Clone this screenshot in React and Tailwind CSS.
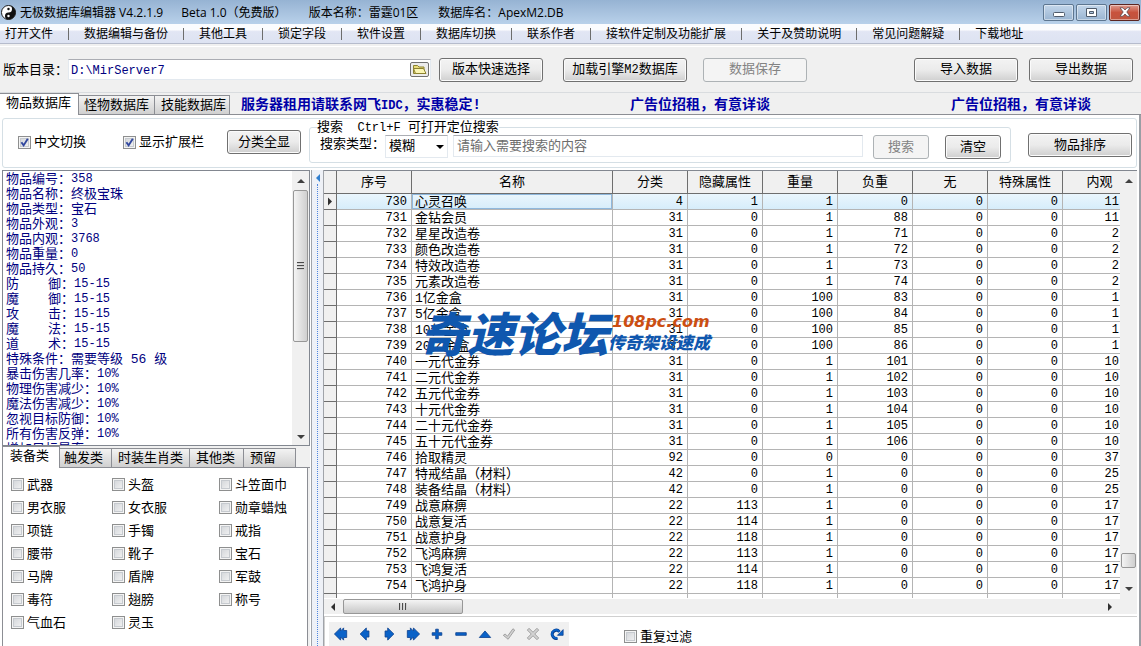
const SONG = "font-['Liberation_Mono','Noto_Sans_CJK_SC',monospace]";
const YAHEI = "font-['Open_Sans','Noto_Sans_CJK_SC',sans-serif]";

const MENU = ['打开文件', '数据编辑与备份', '其他工具', '锁定字段', '软件设置', '数据库切换', '联系作者', '接软件定制及功能扩展', '关于及赞助说明', '常见问题解疑', '下载地址'];

const DETAILS = [
  ['物品编号：', '358'],
  ['物品名称：', '终极宝珠', 'cjk'],
  ['物品类型：', '宝石', 'cjk'],
  ['物品外观：', '3'],
  ['物品内观：', '3768'],
  ['物品重量：', '0'],
  ['物品持久：', '50'],
  ['防御', '15-15', 'wide'],
  ['魔御', '15-15', 'wide'],
  ['攻击', '15-15', 'wide'],
  ['魔法', '15-15', 'wide'],
  ['道术', '15-15', 'wide'],
  ['特殊条件：', '需要等级 56 级', 'cjk'],
  ['暴击伤害几率：', '10%'],
  ['物理伤害减少：', '10%'],
  ['魔法伤害减少：', '10%'],
  ['忽视目标防御：', '10%'],
  ['所有伤害反弹：', '10%'],
  ['增加目标暴率', ''],
];

const ROWS = [
  [730, '心灵召唤', 4, 1, 1, 0, 0, 0, 11],
  [731, '金钻会员', 31, 0, 1, 88, 0, 0, 11],
  [732, '星星改造卷', 31, 0, 1, 71, 0, 0, 2],
  [733, '颜色改造卷', 31, 0, 1, 72, 0, 0, 2],
  [734, '特效改造卷', 31, 0, 1, 73, 0, 0, 2],
  [735, '元素改造卷', 31, 0, 1, 74, 0, 0, 2],
  [736, '1亿金盒', 31, 0, 100, 83, 0, 0, 1],
  [737, '5亿金盒', 31, 0, 100, 84, 0, 0, 1],
  [738, '10亿金盒', 31, 0, 100, 85, 0, 0, 1],
  [739, '20亿金盒', 31, 0, 100, 86, 0, 0, 1],
  [740, '一元代金券', 31, 0, 1, 101, 0, 0, 10],
  [741, '二元代金券', 31, 0, 1, 102, 0, 0, 10],
  [742, '五元代金券', 31, 0, 1, 103, 0, 0, 10],
  [743, '十元代金券', 31, 0, 1, 104, 0, 0, 10],
  [744, '二十元代金券', 31, 0, 1, 105, 0, 0, 10],
  [745, '五十元代金券', 31, 0, 1, 106, 0, 0, 10],
  [746, '拾取精灵', 92, 0, 0, 0, 0, 0, 37],
  [747, '特戒结晶（材料）', 42, 0, 1, 0, 0, 0, 25],
  [748, '装备结晶（材料）', 42, 0, 1, 0, 0, 0, 25],
  [749, '战意麻痹', 22, 113, 1, 0, 0, 0, 17],
  [750, '战意复活', 22, 114, 1, 0, 0, 0, 17],
  [751, '战意护身', 22, 118, 1, 0, 0, 0, 17],
  [752, '飞鸿麻痹', 22, 113, 1, 0, 0, 0, 17],
  [753, '飞鸿复活', 22, 114, 1, 0, 0, 0, 17],
  [754, '飞鸿护身', 22, 118, 1, 0, 0, 0, 17],
];

const COLUMNS = [
  ['序号', 'w-[75px]'],
  ['名称', ''],
  ['分类', 'w-[75px]'],
  ['隐藏属性', 'w-[75px]'],
  ['重量', 'w-[75px]'],
  ['负重', 'w-[75px]'],
  ['无', 'w-[75px]'],
  ['特殊属性', 'w-[75px]'],
  ['内观', 'w-[57px]'],
];

const FILTERS = ['武器', '头盔', '斗笠面巾', '男衣服', '女衣服', '勋章蜡烛', '项链', '手镯', '戒指', '腰带', '靴子', '宝石', '马牌', '盾牌', '军鼓', '毒符', '翅膀', '称号', '气血石', '灵玉'];

function Button({ children, className = '', disabled = false }) {
  return (
    <button
      type="button"
      disabled={disabled}
      className={`h-[24px] shrink-0 rounded-[3px] border pt-[1px] text-center leading-[20px] ${disabled ? 'border-[#adb2b5] bg-[#f4f4f4] text-[#838383]' : 'border-[#707070] bg-linear-to-b from-[#f3f3f3] from-0% via-[#ebebeb] via-50% to-[#cfcfcf] shadow-[inset_0_0_0_1px_#fbfbfb]'} ${className}`}
    >
      {children}
    </button>
  );
}

function Check({ label, checked = false, className = '' }) {
  return (
    <label className={`flex items-center gap-[3px] whitespace-nowrap ${className}`}>
      <span className="relative flex size-[13px] shrink-0">
        <input
          type="checkbox"
          defaultChecked={checked}
          className="peer size-[13px] appearance-none border border-[#8e8f8f] bg-linear-to-br from-[#cfd2d6] to-[#f6f6f6] shadow-[inset_0_0_0_1px_#f4f4f4,inset_0_0_0_2px_#c6cacf]"
        />
        <svg viewBox="0 0 13 13" className="pointer-events-none absolute inset-0 hidden size-[13px] peer-checked:block">
          <path d="M3.4 6.2 L5.6 9.4 L9.8 2.8" fill="none" stroke="#31479e" strokeWidth="1.9" />
        </svg>
      </span>
      <span className="pt-[2px]">{label}</span>
    </label>
  );
}

function Triangle({ dir, className = '' }) {
  const d = {
    up: 'M0 5 L4 1 L8 5 Z',
    down: 'M0 1 L4 5 L8 1 Z',
    left: 'M5 0 L1 4 L5 8 Z',
    right: 'M1 0 L5 4 L1 8 Z',
  }[dir];
  const horizontal = dir === 'left' || dir === 'right';
  return (
    <svg viewBox={horizontal ? '0 0 6 8' : '0 0 8 6'} className={`${horizontal ? 'h-[8px] w-[6px]' : 'h-[6px] w-[8px]'} ${className}`}>
      <path d={d} fill="currentColor" />
    </svg>
  );
}

function TabButton({ label, active = false, className = '' }) {
  return (
    <button
      type="button"
      role="tab"
      aria-selected={active}
      className={`whitespace-nowrap border-[#8c8e94] text-left ${active ? 'self-stretch border-t border-r bg-white pb-[1px]' : 'mt-[2px] border border-l-0 bg-linear-to-b from-[#f3f3f3] to-[#d0d0d0] pt-[1px]'} ${className}`}
    >
      {label}
    </button>
  );
}

function WindowButtons() {
  const base = 'flex h-[17px] items-center justify-center rounded-[2px] border shadow-[inset_0_0_0_1px_#ffffff70]';
  return (
    <div className="flex gap-[2px] pr-[1px]">
      <button type="button" aria-label="最小化" className={`${base} w-[31px] border-[#5d7690] bg-linear-to-b from-[#c3d6ea] to-[#9ab5d2]`}>
        <svg viewBox="0 0 12 9" className="h-[9px] w-[12px]"><rect x="0.5" y="4.5" width="11" height="4" rx="1" fill="#fff" stroke="#4f5b6b" /></svg>
      </button>
      <button type="button" aria-label="最大化" className={`${base} w-[31px] border-[#5d7690] bg-linear-to-b from-[#c3d6ea] to-[#9ab5d2]`}>
        <svg viewBox="0 0 11 9" className="h-[9px] w-[11px]"><path d="M.5 .5h10v8h-10z M3.5 3.5h4v2h-4z" fill="#fff" fillRule="evenodd" stroke="#4f5b6b" /></svg>
      </button>
      <button type="button" aria-label="关闭" className={`${base} w-[31px] border-[#5b2520] bg-linear-to-b from-[#dd9a8e] via-[#c8523d] via-50% to-[#c0553f]`}>
        <svg viewBox="0 0 12 10" className="h-[10px] w-[12px]"><path d="M1 .8h3l2 2.2 2-2.2h3L7.8 5 11 9.2H8L6 7 4 9.2H1L4.2 5z" fill="#fff" stroke="#5a4a50" strokeWidth=".8" /></svg>
      </button>
    </div>
  );
}

const BLUE = '#0a62c8';
const EDGE = '#0a3f8c';
const NAV = [
  ['首条', <path key="p" d="M.5 8 7.5 1v3.500L11 1v3h3.500v8H11v3l-3.500-3.500V15z" fill={BLUE} stroke={EDGE} strokeWidth=".9" />],
  ['上一条', <path key="p" d="M2.500 8 9.500 1v3.500h3v7h-3V15z" fill={BLUE} stroke={EDGE} strokeWidth=".9" />],
  ['下一条', <path key="p" d="M13.500 8 6.500 1v3.500h-3v7h3V15z" fill={BLUE} stroke={EDGE} strokeWidth=".9" />],
  ['末条', <path key="p" d="M15.500 8 8.500 1v3.500L5 1v3H1.500v8H5v3l3.500-3.500V15z" fill={BLUE} stroke={EDGE} strokeWidth=".9" />],
  ['插入', <path key="p" d="M6.500 2.500h3v4h4v3h-4v4h-3v-4h-4v-3h4z" fill={BLUE} stroke={EDGE} strokeWidth=".9" />],
  ['删除', <path key="p" d="M2 6.500h12v3H2z" fill={BLUE} stroke={EDGE} strokeWidth=".9" />],
  ['编辑', <path key="p" d="M1.500 12 8 4.500 14.500 12z" fill={BLUE} stroke={EDGE} strokeWidth=".9" />],
  ['提交', <path key="p" d="M1.500 9.500 3.500 8l2.800 2.500L12.500 2l2 1.500L7 14z" fill="#d2d2d2" stroke="#8f8f8f" strokeWidth=".9" />],
  ['取消', <path key="p" d="M1.500 3.500 3.500 1.500 8 6l4.500-4.500 2 2L10 8l4.500 4.500-2 2L8 10l-4.500 4.500-2-2L6 8z" fill="#d2d2d2" stroke="#8f8f8f" strokeWidth=".9" />],
  ['刷新', (
    <g key="p">
      <path d="M8.500 12.800A4.600 4.600 0 1 1 10.800 5.500" fill="none" stroke={EDGE} strokeWidth="3.400" />
      <path d="M8.500 12.400A4.600 4.600 0 1 1 10.800 5.500" fill="none" stroke={BLUE} strokeWidth="1.900" />
      <path d="M15 3v6.500H8.500z" fill={BLUE} stroke={EDGE} strokeWidth=".9" />
    </g>
  )],
];

function TitleBar() {
  return (
    <header className={`flex h-[24px] shrink-0 items-center bg-linear-to-b from-[#96b3d3] to-[#b9d1ea] pl-[1px] text-[12px] whitespace-pre ${YAHEI}`}>
      <svg viewBox="0 0 16 16" className="size-[15px] shrink-0">
        <circle cx="8" cy="8" r="7.500" fill="#fff" stroke="#111" />
        <path d="M8 .5a7.500 7.500 0 0 1 0 15 3.750 3.750 0 0 1 0-7.500 3.750 3.750 0 0 0 0-7.500z" fill="#111" />
        <circle cx="8" cy="4.200" r="1.300" fill="#111" />
        <circle cx="8" cy="11.800" r="1.300" fill="#fff" />
      </svg>
      <h1 className="flex flex-1 pt-[1px] pl-[4px]">
        <span>无极数据库编辑器 V4.2.1.9</span>
        <span className="pl-[18px]">Beta 1.0（免费版）</span>
        <span className="pl-[22px]">版本名称：雷霆01区</span>
        <span className="pl-[20px]">数据库名：ApexM2.DB</span>
      </h1>
      <WindowButtons />
    </header>
  );
}

function MenuBar() {
  return (
    <nav className={`flex h-[20px] shrink-0 items-center gap-[15px] border-b border-[#b6bccc] bg-linear-to-b from-[#fbfcfe] from-30% via-[#e2e6f4] via-40% to-[#dde3f2] pl-[5px] text-[12px] whitespace-nowrap ${YAHEI}`}>
      {MENU.map((m, i) => [
        i > 0 && <span key={`${m}-sep`} className="h-[12px] w-px bg-[#6d6d6d]" />,
        <button key={m} type="button" className="leading-[18px]">{m}</button>,
      ])}
    </nav>
  );
}

function Toolbar() {
  return (
    <div className="mt-[2px] flex h-[47px] shrink-0 items-center border-y border-t-white border-b-[#d9dcdf] pr-[8px] pl-[3px]">
      <label htmlFor="dir" className="w-[65px] shrink-0 pt-[2px]">版本目录：</label>
      <div className="flex h-[21px] w-[363px] items-center border border-[#e3e9ef] border-t-[#abadb3] bg-white">
        <input id="dir" defaultValue="D:\MirServer7" className="h-full min-w-0 flex-1 px-[2px] pt-[2px] text-[12px] text-[#000080] outline-none" />
        <button type="button" aria-label="浏览目录" className="mr-[1px] flex h-[15px] w-[19px] items-center justify-center rounded-[2px] border border-[#707070] bg-[#ececec]">
          <svg viewBox="0 0 15 11" className="h-[11px] w-[15px]">
            <path d="M1.500 9.500v-8h4l1.500 1.500h5v6.500z" fill="#e9dc7a" stroke="#8c8230" />
            <path d="M3.500 9.500 1.500 4.500h10l2.500 5z" fill="#fbf6b4" stroke="#8c8230" />
          </svg>
        </button>
      </div>
      <Button className="ml-[8px] w-[104px]">版本快速选择</Button>
      <Button className="ml-[20px] w-[124px]">加载引擎<span className="text-[12px]">M2</span>数据库</Button>
      <Button disabled className="ml-[16px] w-[104px]">数据保存</Button>
      <div className="ml-auto flex gap-[11px]">
        <Button className="w-[104px]">导入数据</Button>
        <Button className="w-[104px]">导出数据</Button>
      </div>
    </div>
  );
}

function MainTabs() {
  return (
    <div className="flex h-[22px] shrink-0 shadow-[inset_0_-1px_0_#8c8e94]">
      <div role="tablist" className="flex">
        <TabButton active label="物品数据库" className="w-[79px] pl-[6px]" />
        <TabButton label="怪物数据库" className="w-[76px] pl-[5px]" />
        <TabButton label="技能数据库" className="w-[75px] pl-[6px]" />
      </div>
      <div className="flex flex-1 items-center pt-[2px] pr-[50px] pl-[11px] text-[14px] font-bold text-[#0000a8]">
        <span>服务器租用请联系网飞<span className="text-[12px]">IDC</span>，实惠稳定!</span>
        <span className="ml-[149px]">广告位招租，有意详谈</span>
        <span className="ml-auto">广告位招租，有意详谈</span>
      </div>
    </div>
  );
}

function SearchPanel() {
  return (
    <div className="mx-[2px] mt-[3px] flex h-[50px] shrink-0 rounded-[3px] border border-[#d5dfe5] pr-[4px] pl-[15px]">
      <Check label="中文切换" checked className="h-[46px]" />
      <Check label="显示扩展栏" checked className="ml-[37px] h-[46px]" />
      <Button className="mt-[11px] ml-[23px] w-[74px]">分类全显</Button>
      <fieldset className="ml-[8px] h-[44px] min-w-0 flex-1 rounded-[3px] border border-[#d5dfe5] pr-[9px] pl-[8px]">
        <legend className="-ml-[1px] h-[16px] pt-[1px] whitespace-pre leading-[16px]">搜索<span className="text-[12px]">  Ctrl+F </span>可打开定位搜索</legend>
        <div className="flex items-start">
          <label htmlFor="mode" className="w-[67px] shrink-0 pl-[2px] leading-[20px]">搜索类型：</label>
          <div className="relative h-[23px] w-[63px] shrink-0">
            <select id="mode" className="size-full appearance-none border border-[#e3e9ef] border-t-[#abadb3] bg-white pl-[3px] outline-none">
              <option>模糊</option>
            </select>
            <Triangle dir="down" className="pointer-events-none absolute top-[9px] right-[4px]" />
          </div>
          <input aria-label="搜索内容" placeholder="请输入需要搜索的内容" className="ml-[5px] h-[22px] min-w-0 flex-1 border border-[#e3e9ef] border-t-[#abadb3] px-[3px] outline-none placeholder:text-[#6d6d6d]" />
          <Button disabled className="ml-[10px] w-[56px]">搜索</Button>
          <Button className="ml-[16px] w-[56px]">清空</Button>
        </div>
      </fieldset>
      <Button className="mt-[14px] ml-[17px] w-[104px]">物品排序</Button>
    </div>
  );
}

function Grip({ vertical = false }) {
  return (
    <span className={`flex gap-[1px] ${vertical ? 'flex-col' : ''}`}>
      {[0, 1, 2].map((i) => (
        <span key={i} className={vertical ? 'h-[2px] w-[7px] border-t border-[#4a4a4a] bg-[#cfcfcf]' : 'h-[7px] w-[2px] border-l border-[#4a4a4a] bg-[#cfcfcf]'} />
      ))}
    </span>
  );
}

function DetailPane() {
  return (
    <section className="flex h-[276px] shrink-0 overflow-hidden border border-[#828790] bg-white">
      <div className="flex-1 overflow-hidden pt-[1px] pl-[3px] leading-[15px] text-[#000080]">
        {DETAILS.map(([label, value, kind]) => (
          <p key={label} className="flex h-[15px] whitespace-pre">
            {kind === 'wide' ? (
              <>
                <span className="w-[42px]">{label[0]}</span>
                <span>{label[1]}：</span>
              </>
            ) : (
              <span>{label}</span>
            )}
            <span className={kind === 'cjk' ? '' : 'text-[12px]'}>{value}</span>
          </p>
        ))}
      </div>
      <div className="flex w-[17px] flex-col items-center bg-[#f0f0f0] text-[#404040]">
        <span className="flex h-[19px] items-center"><Triangle dir="up" /></span>
        <span className="flex h-[152px] w-[15px] items-center justify-center rounded-[2px] border border-[#979797] bg-linear-to-r from-[#f4f4f4] to-[#cfcfcf]">
          <Grip vertical />
        </span>
        <span className="mt-auto flex h-[17px] items-center"><Triangle dir="down" /></span>
      </div>
    </section>
  );
}

function FilterPane() {
  return (
    <section className="flex min-h-0 flex-1 flex-col bg-[#f0f0f0]">
      <div role="tablist" className="flex h-[22px] shrink-0 leading-[18px] shadow-[inset_0_-1px_0_#8c8e94]">
        <TabButton active label="装备类" className="w-[58px] border-l pl-[7px]" />
        <TabButton label="触发类" className="w-[52px] pl-[4px]" />
        <TabButton label="时装生肖类" className="w-[78px] pl-[6px]" />
        <TabButton label="其他类" className="w-[54px] pl-[6px]" />
        <TabButton label="预留" className="w-[52px] pl-[6px]" />
      </div>
      <div className="mr-[2px] grid flex-1 auto-rows-[23px] grid-cols-[101px_107px_1fr] border-x border-[#8c8e94] bg-white pt-[5px] pl-[8px]">
        {FILTERS.map((f) => <Check key={f} label={f} />)}
      </div>
    </section>
  );
}

function Splitter() {
  return (
    <div className="ml-[1px] flex w-[13px] shrink-0 flex-col items-center gap-[2px] border-x border-[#a0a4aa] bg-[#eef1f7] pt-[4px] text-[#2f7fd0]">
      <Triangle dir="left" />
      <span className="w-0 flex-1 border-l border-dotted border-[#4f86e0]" />
    </div>
  );
}

function Watermark() {
  return (
    <div className="pointer-events-none absolute top-[136px] left-[96px] flex items-center font-['Noto_Sans_CJK_SC',sans-serif] font-black whitespace-nowrap text-[#0f57ae] italic">
      <span className="text-[47px] leading-[50px]">奇速论坛</span>
      <span className="flex flex-col items-start">
        <span className="pl-[4px] font-['DejaVu_Sans',sans-serif] text-[16px] leading-[20px] text-[#cc4e12]">108pc.com</span>
        <span className="text-[17px] leading-[20px]">传奇架设速成</span>
      </span>
    </div>
  );
}

function DataGrid() {
  return (
    <div className="flex h-[429px] shrink-0 overflow-hidden border-t border-[#828790]">
      <div className="relative min-w-0 flex-1 overflow-hidden">
        <table className="w-full table-fixed border-separate border-spacing-0">
          <thead>
            <tr className="h-[23px] bg-[#f0f0f0]">
              <th aria-label="行标" className="w-[13px] border-r border-b border-[#6e6e6e]" />
              {COLUMNS.map(([name, width], i) => (
                <th key={name} className={`border-b border-[#6e6e6e] p-0 pt-[2px] font-normal leading-[20px] ${width} ${i === 8 ? 'pl-[16px]' : 'border-r'}`}>{name}</th>
              ))}
            </tr>
          </thead>
          <tbody>
            {ROWS.map((row, r) => (
              <tr key={row[0]} className={`h-[16px] ${r === 0 ? 'bg-linear-to-b from-[#eaf6fd] to-[#d5ecfa]' : ''}`}>
                <td className="border-r border-b border-[#6e6e6e] bg-[#f0f0f0] p-0 leading-[15px] text-[#303030]">
                  {r === 0 && <Triangle dir="right" className="mx-auto h-[9px]" />}
                </td>
                {row.map((cell, i) => (
                  <td
                    key={COLUMNS[i][0]}
                    className={`h-[16px] overflow-hidden border-b border-[#b4b4b4] p-0 pt-[2px] whitespace-nowrap leading-[13px] ${i === 1 ? 'border-r pl-[3px] text-left' : i === 8 ? 'pr-[1px] text-right text-[12px]' : 'border-r pr-[4px] text-right text-[12px]'} ${r === 0 && i === 1 ? 'shadow-[inset_0_0_0_1px_#8fb8dc]' : ''}`}
                  >
                    {cell}
                  </td>
                ))}
              </tr>
            ))}
            <tr className="h-[4px]">
              <td className="border-r border-[#6e6e6e] bg-[#f0f0f0] p-0" />
              {COLUMNS.map(([name], i) => <td key={name} className={`border-[#b4b4b4] p-0 ${i < 8 ? 'border-r' : ''}`} />)}
            </tr>
          </tbody>
        </table>
        <Watermark />
      </div>
      <div className="flex w-[17px] flex-col items-center bg-[#f0f0f0] text-[#404040]">
        <span className="flex h-[19px] items-center"><Triangle dir="up" /></span>
        <span className="mt-auto h-[15px] w-[15px] rounded-[2px] border border-[#979797] bg-linear-to-r from-[#f4f4f4] to-[#cfcfcf]" />
        <span className="mt-[13px] mb-[3px] flex h-[15px] items-center"><Triangle dir="down" /></span>
      </div>
    </div>
  );
}

function GridFooter() {
  return (
    <>
      <div className="flex h-[15px] shrink-0 items-center bg-[#f0f0f0] pr-[24px] pl-[6px] text-[#303030]">
        <Triangle dir="left" />
        <span className="ml-[7px] flex h-[15px] w-[120px] items-center justify-center rounded-[2px] border border-[#979797] bg-linear-to-b from-[#f4f4f4] to-[#c8c8c8]">
          <Grip />
        </span>
        <Triangle dir="right" className="ml-auto" />
      </div>
      <div className="mt-[2px] flex flex-1 border-t border-l border-[#d0d0d0] pl-[4px]">
        <div className="mt-[5px] flex h-[26px] w-[240px] bg-[#f0f0f0]">
          {NAV.map(([label, icon]) => (
            <button key={label} type="button" aria-label={label} className="flex h-[24px] w-[24px] items-center justify-center">
              <svg viewBox="0 0 16 16" className="size-[14px]">{icon}</svg>
            </button>
          ))}
        </div>
        <Check label="重复过滤" className="mt-[8px] ml-[55px] h-[23px]" />
      </div>
    </>
  );
}

export default function App() {
  return (
    <div className={`flex h-screen flex-col overflow-hidden bg-[#f0f0f0] text-[13px] leading-[18px] text-black ${SONG}`}>
      <TitleBar />
      <MenuBar />
      <Toolbar />
      <MainTabs />
      <main className="flex min-h-0 flex-1 flex-col border-r-2 border-[#9a9ea4] bg-white">
        <SearchPanel />
        <div className="mt-[2px] flex min-h-0 flex-1 overflow-hidden pl-[2px]">
          <div className="flex w-[308px] shrink-0 flex-col">
            <DetailPane />
            <FilterPane />
          </div>
          <Splitter />
          <div className="flex min-w-0 flex-1 flex-col pr-[2px]">
            <DataGrid />
            <GridFooter />
          </div>
        </div>
      </main>
    </div>
  );
}
